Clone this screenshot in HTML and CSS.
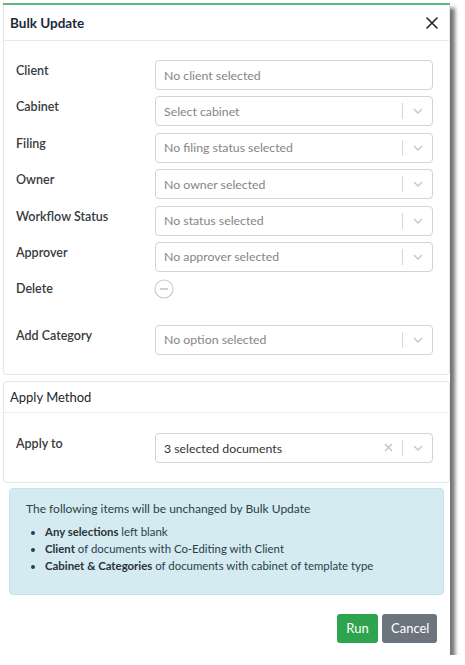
FILE: index.html
```html
<!DOCTYPE html>
<html lang="en">
<head>
<meta charset="utf-8">
<title>Bulk Update</title>
<link rel="stylesheet" href="styles.css">
</head>
<body>
<div class="modal">
  <section class="card">
    <header class="modal-header">
      <h1 class="title">Bulk Update</h1>
      <button class="close" aria-label="Close">
        <svg width="12" height="12" viewBox="0 0 12 12"><path d="M1 1 L11 11 M11 1 L1 11" stroke="#222" stroke-width="1.6" stroke-linecap="round" fill="none"/></svg>
      </button>
    </header>
    <div class="card-body">
      <div class="row">
        <div class="label">Client</div>
        <div class="control plain"><span class="placeholder">No client selected</span></div>
      </div>
      <div class="row">
        <div class="label">Cabinet</div>
        <div class="control"><span class="placeholder">Select cabinet</span><span class="sep"></span><span class="chev"><svg width="10" height="6" viewBox="0 0 10 6"><path d="M1 1 L5 5 L9 1" stroke="#c4c4c4" stroke-width="1.3" fill="none"/></svg></span></div>
      </div>
      <div class="row">
        <div class="label">Filing</div>
        <div class="control"><span class="placeholder">No filing status selected</span><span class="sep"></span><span class="chev"><svg width="10" height="6" viewBox="0 0 10 6"><path d="M1 1 L5 5 L9 1" stroke="#c4c4c4" stroke-width="1.3" fill="none"/></svg></span></div>
      </div>
      <div class="row">
        <div class="label">Owner</div>
        <div class="control"><span class="placeholder">No owner selected</span><span class="sep"></span><span class="chev"><svg width="10" height="6" viewBox="0 0 10 6"><path d="M1 1 L5 5 L9 1" stroke="#c4c4c4" stroke-width="1.3" fill="none"/></svg></span></div>
      </div>
      <div class="row">
        <div class="label">Workflow Status</div>
        <div class="control"><span class="placeholder">No status selected</span><span class="sep"></span><span class="chev"><svg width="10" height="6" viewBox="0 0 10 6"><path d="M1 1 L5 5 L9 1" stroke="#c4c4c4" stroke-width="1.3" fill="none"/></svg></span></div>
      </div>
      <div class="row">
        <div class="label">Approver</div>
        <div class="control"><span class="placeholder">No approver selected</span><span class="sep"></span><span class="chev"><svg width="10" height="6" viewBox="0 0 10 6"><path d="M1 1 L5 5 L9 1" stroke="#c4c4c4" stroke-width="1.3" fill="none"/></svg></span></div>
      </div>
      <div class="row delete-row">
        <div class="label">Delete</div>
        <div class="toggle"><svg width="20" height="20" viewBox="0 0 20 20"><circle cx="10" cy="10" r="9" stroke="#c9c9c9" stroke-width="1.1" fill="#fff"/><path d="M6 10 H14" stroke="#b8b8b8" stroke-width="1.3"/></svg></div>
      </div>
      <div class="row">
        <div class="label">Add Category</div>
        <div class="control"><span class="placeholder">No option selected</span><span class="sep"></span><span class="chev"><svg width="10" height="6" viewBox="0 0 10 6"><path d="M1 1 L5 5 L9 1" stroke="#c4c4c4" stroke-width="1.3" fill="none"/></svg></span></div>
      </div>
    </div>
  </section>

  <section class="card card2">
    <header class="sub-header">Apply Method</header>
    <div class="card-body">
      <div class="row">
        <div class="label">Apply to</div>
        <div class="control"><span class="value">3 selected documents</span><span class="clear"><svg width="9" height="9" viewBox="0 0 9 9"><path d="M1 1 L8 8 M8 1 L1 8" stroke="#c2c2c2" stroke-width="1.4" fill="none"/></svg></span><span class="sep"></span><span class="chev"><svg width="10" height="6" viewBox="0 0 10 6"><path d="M1 1 L5 5 L9 1" stroke="#c4c4c4" stroke-width="1.3" fill="none"/></svg></span></div>
      </div>
    </div>
  </section>

  <div class="info">
    <p class="info-title">The following items will be unchanged by Bulk Update</p>
    <ul class="info-list">
      <li><b>Any selections</b> left blank</li>
      <li><b>Client</b> of documents with Co-Editing with Client</li>
      <li><b>Cabinet &amp; Categories</b> of documents with cabinet of template type</li>
    </ul>
  </div>

  <footer class="footer">
    <button class="btn btn-run">Run</button>
    <button class="btn btn-cancel">Cancel</button>
  </footer>
</div>
</body>
</html>
```
FILE: styles.css
```css
* { box-sizing: border-box; }

body {
  margin: 0;
  background: #ffffff;
  font-family: "Lato", "Open Sans", sans-serif;
  font-size: 12.3px;
  color: #333;
}

.modal {
  margin: 3px 0 0 3px;
  width: 447px;
  background: #fff;
  border-top: 2px solid #5cb884;
  box-shadow: 5px 5px 4px rgba(0, 0, 0, 0.55);
}

.card {
  border: 1px solid #e7e7e7;
  border-top: none;
  border-radius: 0 0 4px 4px;
}

.card2 {
  margin-top: 6px;
  border-top: 1px solid #e7e7e7;
  border-radius: 4px;
}

.modal-header {
  height: 36px;
  border-bottom: 1px solid #e9e9e9;
  display: flex;
  align-items: center;
  justify-content: space-between;
  padding: 0 9px 0 6px;
}

.title {
  margin: 0;
  font-size: 13.5px;
  font-weight: 700;
  color: #1c2a3b;
}

.close {
  border: none;
  background: none;
  padding: 0;
  width: 16px;
  height: 16px;
  display: flex;
  align-items: center;
  justify-content: center;
}

.sub-header {
  height: 31px;
  border-bottom: 1px solid #ececec;
  padding: 0 6px;
  display: flex;
  align-items: center;
  font-size: 13px;
  color: #22272b;
}

.card-body {
  padding: 19px 16px 19px 12px;
  display: flex;
  flex-direction: column;
  gap: 6.4px;
}

.card2 .card-body { padding-top: 20px; }

.row {
  display: grid;
  grid-template-columns: 139px 278px;
  align-items: start;
}

.label {
  padding-top: 2px;
  line-height: 18px;
  font-weight: 600;
  font-size: 12.5px;
  color: #353b41;
}

.delete-row { height: 40px; }

.toggle {
  margin-left: -1px;
  margin-top: 1px;
  height: 20px;
}
.toggle svg { display: block; }

.control {
  height: 30px;
  border: 1px solid #d3d3d3;
  border-radius: 4px;
  display: flex;
  align-items: center;
  padding-left: 8px;
}

.placeholder {
  flex: 1;
  color: #858585;
}

.value {
  flex: 1;
  color: #333;
  padding-top: 2px;
}

.sep {
  width: 1px;
  height: 16px;
  background: #d6d6d6;
}

.chev {
  width: 29px;
  display: flex;
  justify-content: center;
  align-items: center;
}
.chev svg, .clear svg { display: block; }

.clear {
  width: 16px;
  margin-right: 6px;
  display: flex;
  justify-content: center;
}

.info {
  margin: 5px 6px 0;
  background: #d4ebf2;
  border: 1px solid #c6e3ec;
  border-radius: 4px;
  padding: 11px 16px 20px;
  color: #2c3e48;
  font-size: 12px;
}

.info-title {
  margin: 0 0 5px;
  line-height: 18px;
}

.info-list {
  margin: 0;
  padding-left: 19px;
  line-height: 17px;
  font-size: 11.4px;
}

.info-list b { color: #2a3338; }

.footer {
  display: flex;
  justify-content: flex-end;
  gap: 4px;
  padding: 19px 13px 12px;
}

.btn {
  height: 29px;
  border: none;
  border-radius: 3px;
  color: #fff;
  font-family: "Lato", "Open Sans", sans-serif;
  font-size: 13px;
  padding: 0 9px;
}

.btn-run { background: #2ea44f; width: 41px; }
.btn-cancel { background: #6c757d; width: 55px; }
```
